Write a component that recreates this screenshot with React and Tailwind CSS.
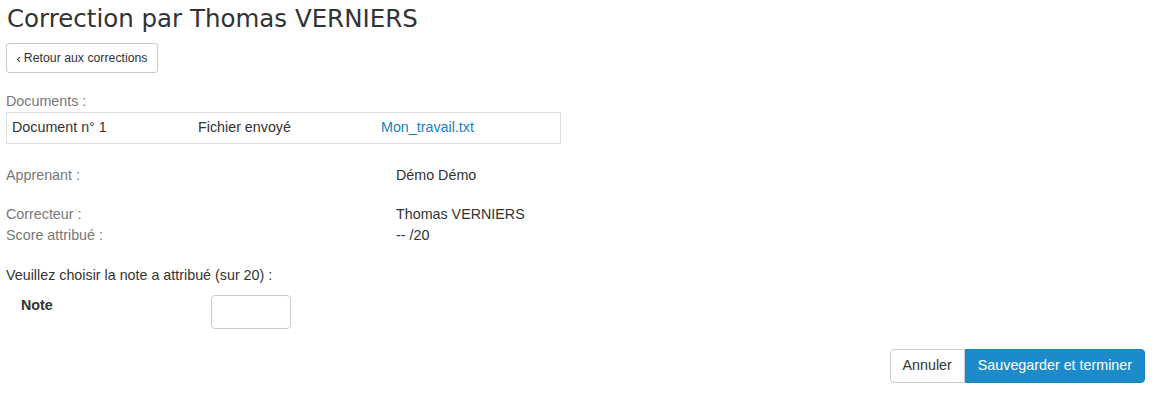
export default function App() {
  const body = { fontFamily: "'Liberation Sans', Arial, sans-serif" };
  return (
    <div className="bg-white w-[1156px] h-[404px] text-[14.3px] text-[#333] px-[6px]" style={body}>
      <h1 className="h-[38px] pt-[2px] pl-[1px] text-[24.5px] leading-[34px] text-[#333]" style={{ fontFamily: "'DejaVu Sans', sans-serif", fontWeight: 400 }}>
        Correction par Thomas VERNIERS
      </h1>
      <div className="h-[46px] pt-[5px]">
        <button className="h-[30px] w-[152px] border border-[#ccc] rounded-[3px] bg-white text-[12.3px] text-[#333] flex items-center justify-center gap-[3px]">
          <span className="text-[13px] leading-none">‹</span>Retour aux corrections
        </button>
      </div>
      <div className="h-[28px] leading-[20px] text-[#777] pt-[7px]">Documents :</div>
      <div className="w-[555px] h-[32px] border border-[#ddd] flex items-center">
        <div className="w-[191px] pl-[5px]">Document n° 1</div>
        <div className="w-[183px]">Fichier envoyé</div>
        <div className="text-[#1a80c2]">Mon_travail.txt</div>
      </div>
      <div className="h-[21px]" />
      <div className="flex h-[20px] leading-[20px]">
        <div className="w-[390px] text-[#777]">Apprenant :</div>
        <div>Démo Démo</div>
      </div>
      <div className="h-[19px]" />
      <div className="flex h-[21px] leading-[21px]">
        <div className="w-[390px] text-[#777]">Correcteur :</div>
        <div>Thomas VERNIERS</div>
      </div>
      <div className="flex h-[21px] leading-[21px]">
        <div className="w-[390px] text-[#777]">Score attribué :</div>
        <div>-- /20</div>
      </div>
      <div className="h-[19px]" />
      <div className="h-[20px] leading-[20px]">Veuillez choisir la note a attribué (sur 20) :</div>
      <div className="h-[10px]" />
      <div className="flex items-start h-[44px]">
        <div className="w-[205px] pl-[15px] font-bold leading-[20px]">Note</div>
        <input className="w-[80px] h-[34px] border border-[#ccc] rounded-[4px]" />
      </div>
      <div className="h-[10px]" />
      <div className="flex justify-end pr-[5px]">
        <button className="h-[34px] px-[12px] border border-[#ccc] bg-white rounded-l-[4px] text-[#333]">Annuler</button>
        <button className="h-[34px] px-[12px] border border-[#1586c4] bg-[#1b8bc9] text-white rounded-r-[4px]">Sauvegarder et terminer</button>
      </div>
    </div>
  );
}
